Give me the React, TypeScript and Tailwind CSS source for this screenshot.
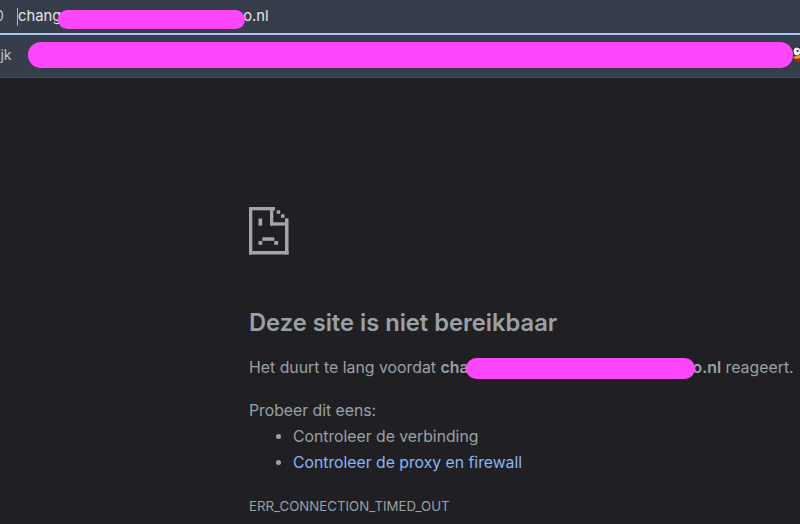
export default function App() {
  return (
    <div className="w-[800px] h-[524px] overflow-hidden bg-[#202024] flex flex-col font-['Inter','Liberation_Sans',sans-serif]">
      <div className="h-[33px] shrink-0 bg-[#373e4b] flex items-center relative">
        <span className="absolute left-[-5px] top-[7px] text-[14px] leading-[18px] text-[#c4c7c5]">0</span>
        <div className="ml-[17px] w-px h-[18px] bg-[#aeb4bd]"></div>
        <span className="text-[14.75px] text-[#e3e5e8] whitespace-nowrap">chang<span className="inline-block w-[182px]"></span>o.nl</span>
        <div className="absolute left-[58px] top-[10px] w-[187px] h-[19px] rounded-full bg-[#fe47fc]"></div>
      </div>
      <div className="h-[2px] shrink-0 bg-[#a8c7fa]"></div>
      <div className="h-[43px] shrink-0 bg-[#373e4b] border-b border-[#424955] pb-[2px] flex items-center relative">
        <span className="absolute left-[-3px] top-[11px] text-[14px] leading-[18px] text-[#c4c7c5]">ijk</span>
        <div className="ml-[28px] w-[765px] h-[26px] rounded-full bg-[#fe47fc]"></div>
        <svg className="absolute left-[792px] top-[11px]" width="8" height="20" viewBox="0 0 8 20">
          <path d="M1.5 2 Q5 0 8 1 L8 10 L1.5 10 Z" fill="#262626" />
          <ellipse cx="5" cy="5.5" rx="3.4" ry="4" fill="#f1f1f1" />
          <circle cx="5.6" cy="5" r="1.1" fill="#222" />
          <path d="M1 11 L8 9 L8 15 L3 13 Z" fill="#f2a11f" />
          <path d="M3 13 L8 12 L8 17 L4 16 Z" fill="#9a2a18" />
        </svg>
      </div>
      <div className="flex-1 flex flex-col pl-[249px] relative whitespace-nowrap">
        <svg className="mt-[129px] shrink-0" width="40" height="48" viewBox="0 0 40 48" fill="#a3a5a8">
          <rect x="0" y="0" width="3.3" height="47.5" />
          <rect x="0" y="0" width="26" height="3.3" />
          <rect x="0" y="44" width="39.5" height="3.5" />
          <rect x="36" y="11.3" width="3.5" height="36" />
          <rect x="27.7" y="3.3" width="3.5" height="3.5" />
          <rect x="32" y="7.3" width="3.5" height="3.5" />
          <rect x="21" y="3" width="3.3" height="15.5" />
          <rect x="21" y="15.3" width="18" height="3.3" />
          <rect x="9.5" y="11.5" width="3.7" height="7.2" />
          <rect x="13.3" y="30.3" width="12" height="3.5" />
          <rect x="9.5" y="34" width="3.8" height="3.8" />
          <rect x="25.3" y="34" width="3.8" height="3.8" />
        </svg>
        <h1 className="mt-[51px] text-[23.7px] leading-[34px] font-semibold text-[#9aa0a6]">Deze site is niet bereikbaar</h1>
        <p className="mt-[17px] text-[15.85px] leading-[22px] text-[#9aa0a6]">
          Het duurt te lang voordat <b className="font-semibold">cha<span className="inline-block w-[224px]"></span>o.nl</b> reageert.
        </p>
        <div className="absolute left-[466px] top-[280px] w-[229px] h-[21px] rounded-full bg-[#fe47fc]"></div>
        <p className="mt-[21px] text-[15.75px] leading-[22px] text-[#9aa0a6]">Probeer dit eens:</p>
        <ul className="mt-[2px] pl-[44px] list-disc text-[15.75px] leading-[26px] text-[#9aa0a6]">
          <li>Controleer de verbinding</li>
          <li className="text-[#8ab4f8] marker:text-[#9aa0a6]">Controleer de proxy en firewall</li>
        </ul>
        <p className="mt-[22px] text-[13.25px] leading-[16px] text-[#9aa0a6]">ERR_CONNECTION_TIMED_OUT</p>
      </div>
    </div>
  );
}
